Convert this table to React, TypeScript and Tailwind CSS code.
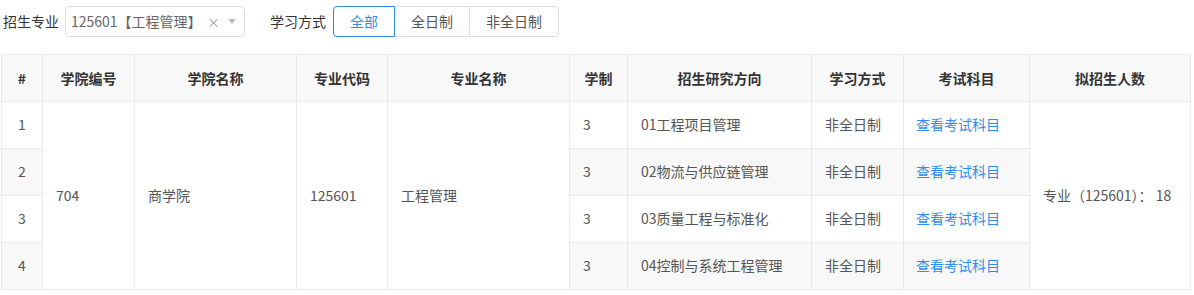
const font = { fontFamily: '"Microsoft YaHei", "Noto Sans CJK SC", "Noto Sans", sans-serif' };

const directions = [
  '01工程项目管理',
  '02物流与供应链管理',
  '03质量工程与标准化',
  '04控制与系统工程管理',
];

const cols = [41, 92, 162, 91, 182, 58, 184, 92, 126, 161];

const headers = [
  '#',
  '学院编号',
  '学院名称',
  '专业代码',
  '专业名称',
  '学制',
  '招生研究方向',
  '学习方式',
  '考试科目',
  '拟招生人数',
];

export default function App() {
  return (
    <div
      className="min-h-[295px] w-[1194px] bg-white pl-px text-[14px] text-[#555]"
      style={font}
    >
      {/* Filters */}
      <div className="flex h-[54px] items-start pt-[6px] pl-[2px]">
        <span className="mr-[6px] flex h-[31px] items-center text-[#333]">招生专业</span>
        <div className="flex h-[31px] w-[180px] items-center rounded-[4px] border border-[#dcdee2] pr-[8px] pl-[5px]">
          <span className="flex-1 text-[#666]">125601【工程管理】</span>
          <span className="mr-[8px] text-[13px] text-[#999]">×</span>
          <span className="text-[#bbb]">
            <svg width="8" height="5" viewBox="0 0 8 5">
              <path d="M0 0h8L4 5z" fill="currentColor" />
            </svg>
          </span>
        </div>
        <span className="mr-[7px] ml-[25px] flex h-[31px] items-center text-[#333]">学习方式</span>
        <div className="flex h-[31px]">
          <button className="relative z-10 rounded-l-[4px] border border-[#2d8cf0] px-[16px] text-[#2d8cf0]">
            全部
          </button>
          <button className="-ml-px border border-[#dcdee2] px-[16px] text-[#555]">全日制</button>
          <button className="-ml-px rounded-r-[4px] border border-[#dcdee2] px-[16px] text-[#555]">
            非全日制
          </button>
        </div>
      </div>

      {/* Table */}
      <table className="w-[1190px] table-fixed border-collapse border border-[#e8eaec]">
        <colgroup>
          {cols.map((w, i) => (
            <col key={i} style={{ width: w }} />
          ))}
        </colgroup>
        <thead>
          <tr className="h-[47px] border-b border-b-[#2d8cf0] bg-[#f8f8f9]">
            {headers.map((h) => (
              <th
                key={h}
                className="border-r border-[#e8eaec] px-[8px] text-center font-bold text-[#333]"
              >
                {h}
              </th>
            ))}
          </tr>
        </thead>
        <tbody>
          {directions.map((d, i) => {
            const bg = i % 2 === 1 ? 'bg-[#f8f8f9]' : 'bg-white';
            return (
              <tr key={d} className="h-[47px]">
                <td className={`border border-[#e8eaec] pb-px text-center ${bg}`}>{i + 1}</td>
                {i === 0 && (
                  <>
                    <td rowSpan={4} className="border border-[#e8eaec] px-[13px]">
                      704
                    </td>
                    <td rowSpan={4} className="border border-[#e8eaec] px-[13px]">
                      商学院
                    </td>
                    <td rowSpan={4} className="border border-[#e8eaec] px-[13px]">
                      125601
                    </td>
                    <td rowSpan={4} className="border border-[#e8eaec] px-[13px]">
                      工程管理
                    </td>
                  </>
                )}
                <td className={`border border-[#e8eaec] px-[13px] pb-px ${bg}`}>3</td>
                <td className={`border border-[#e8eaec] px-[13px] pb-px ${bg}`}>{d}</td>
                <td className={`border border-[#e8eaec] px-[13px] pb-px ${bg}`}>非全日制</td>
                <td className={`border border-[#e8eaec] px-[12px] pb-px ${bg}`}>
                  <a className="cursor-pointer text-[#2d8cf0]">查看考试科目</a>
                </td>
                {i === 0 && (
                  <td rowSpan={4} className="border border-[#e8eaec] px-[13px]">
                    专业（125601）： 18
                  </td>
                )}
              </tr>
            );
          })}
        </tbody>
      </table>
    </div>
  );
}
